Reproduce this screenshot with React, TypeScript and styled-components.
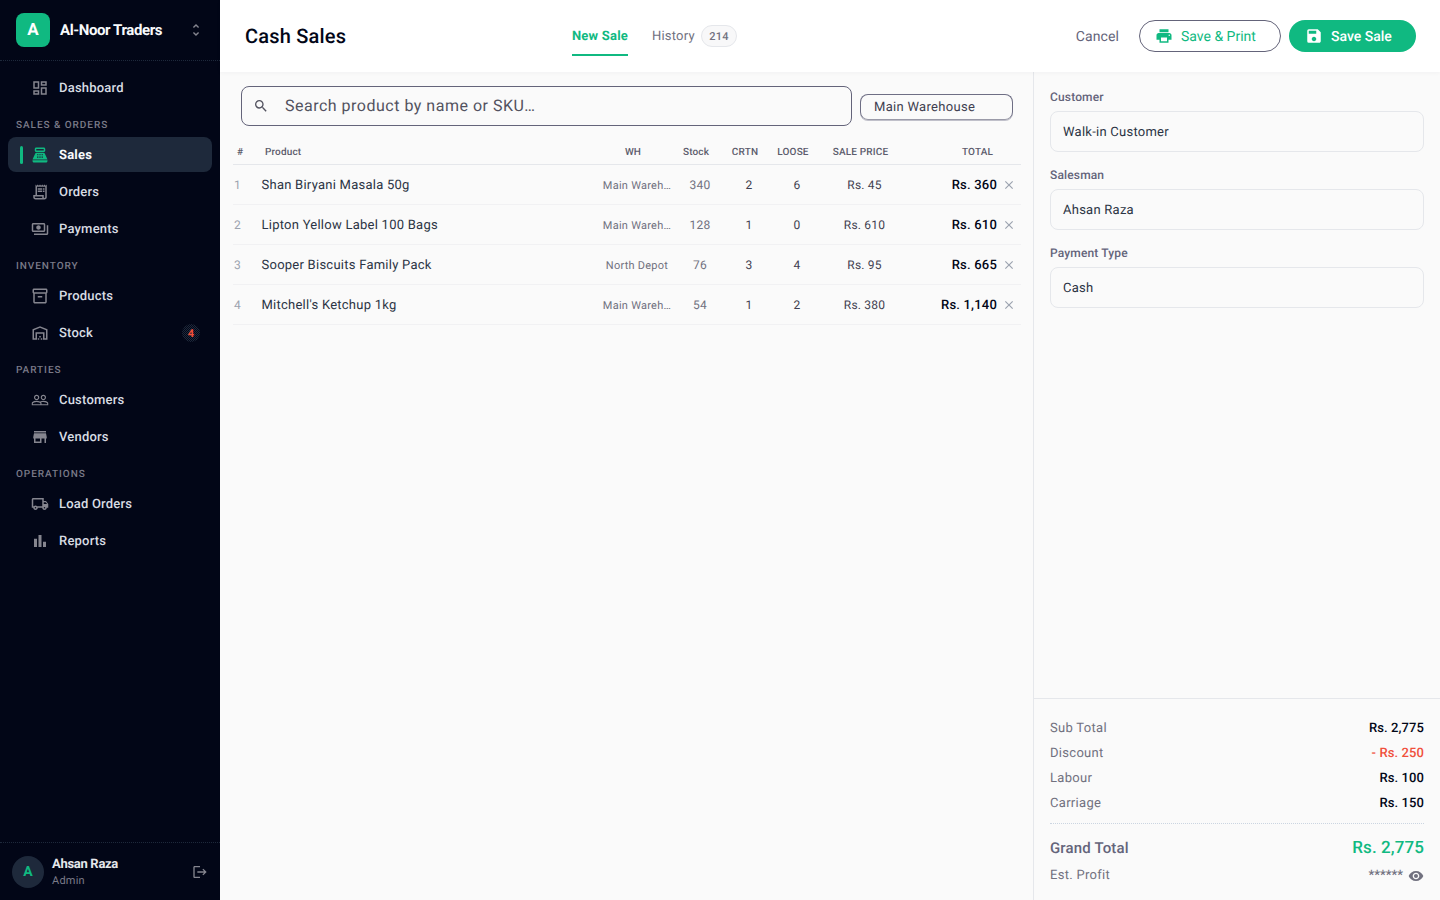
import React from 'react';
import styled, {createGlobalStyle} from 'styled-components';
import {
  MdOutlineDashboard,
  MdPointOfSale,
  MdOutlineReceiptLong,
  MdOutlinePayments,
  MdOutlineInventory2,
  MdOutlineWarehouse,
  MdPeopleOutline,
  MdStore,
  MdOutlineLocalShipping,
  MdBarChart,
  MdUnfoldMore,
  MdLogout,
  MdPrint,
  MdSave,
  MdSearch,
  MdClose,
  MdVisibility,
} from 'react-icons/md';

const GlobalStyle = createGlobalStyle`
  html, body {
    margin: 0;
    padding: 0;
    height: 100%;
    overflow: hidden;
    background: #fafafa;
    font-family: Roboto, "Liberation Sans", sans-serif;
    text-rendering: geometricPrecision;
  }
  * {
    box-sizing: border-box;
  }
`;

const Shell = styled.div`
  display: flex;
  width: 1440px;
  height: 900px;
`;

const Sidebar = styled.aside`
  width: 220px;
  flex-shrink: 0;
  display: flex;
  flex-direction: column;
  background: #020617;
`;

const Brand = styled.div`
  height: 61px;
  display: flex;
  align-items: center;
  padding: 0 16px 1px;
  border-bottom: 1px dotted #1e293b;
`;

const BrandLogo = styled.div`
  width: 34px;
  height: 34px;
  border-radius: 8px;
  background: #10b981;
  color: #fff;
  display: flex;
  align-items: center;
  justify-content: center;
  font-size: 17px;
  font-weight: 700;
`;

const BrandName = styled.div`
  margin-left: 10px;
  flex: 1;
  color: #f8fafc;
  font-size: 15px;
  font-weight: 700;
  letter-spacing: -0.4px;
`;

const BrandToggle = styled.span`
  display: flex;
  color: #85858f;
  font-size: 16px;
`;

const Nav = styled.nav`
  flex: 1;
  padding: 9px 8px 0;
`;

const SectionLabel = styled.div`
  height: 30px;
  padding: 11px 8px 0;
  color: #7a7a88;
  font-size: 10px;
  line-height: 16px;
  font-weight: 500;
  letter-spacing: 0.95px;
`;

const NavRow = styled.div<{$active?: boolean}>`
  position: relative;
  height: 35px;
  margin-bottom: 2px;
  display: flex;
  align-items: center;
  padding: 1px 0 0 23px;
  border-radius: 8px;
  background: ${(p) => (p.$active ? '#1e293b' : 'transparent')};
  color: ${(p) => (p.$active ? '#f8fafc' : '#d8dce3')};
  font-size: 13px;
  font-weight: ${(p) => (p.$active ? 700 : 500)};
  letter-spacing: 0.2px;
  svg {
    font-size: 18px;
    margin: -1px 10px 0 0;
    color: ${(p) => (p.$active ? '#10b981' : '#85858f')};
  }
`;

const ActiveBar = styled.span`
  position: absolute;
  left: 12px;
  top: 9px;
  width: 3px;
  height: 18px;
  border-radius: 2px;
  background: #10b981;
`;

const NavBadge = styled.span`
  position: absolute;
  right: 12px;
  top: 9px;
  width: 18px;
  height: 18px;
  border-radius: 50%;
  background: repeating-conic-gradient(#1e293b 0 25%, #020617 0 50%) 0 0 / 2px 2px;
  color: #f0503c;
  font-size: 11px;
  font-weight: 700;
  display: flex;
  align-items: center;
  justify-content: center;
`;

const UserBar = styled.div`
  height: 58px;
  display: flex;
  align-items: center;
  padding: 0 12px;
  border-top: 1px dotted #1e293b;
`;

const Avatar = styled.div`
  width: 32px;
  height: 32px;
  border-radius: 50%;
  background: #1e293b;
  color: #10b981;
  display: flex;
  align-items: center;
  justify-content: center;
  font-size: 14px;
  font-weight: 700;
`;

const UserInfo = styled.div`
  flex: 1;
  margin-left: 8px;
  padding-top: 2px;
`;

const UserName = styled.div`
  color: #e5e7eb;
  font-size: 13px;
  line-height: 16px;
  font-weight: 700;
  letter-spacing: -0.3px;
`;

const UserRole = styled.div`
  color: #7a7a88;
  font-size: 11px;
  line-height: 16px;
  letter-spacing: 0.2px;
`;

const LogoutIcon = styled.span`
  display: flex;
  color: #85858f;
  font-size: 16px;
`;

const Main = styled.main`
  flex: 1;
  min-width: 0;
  display: flex;
  flex-direction: column;
`;

const TopBar = styled.header`
  position: relative;
  height: 72px;
  display: flex;
  align-items: center;
  padding: 0 24px 0 25px;
  background: #fff;
  box-shadow: 0 1px 4px rgba(15, 23, 42, 0.04);
`;

const Title = styled.h1`
  width: 327px;
  margin: 0;
  color: #020617;
  font-size: 20px;
  font-weight: 500;
  letter-spacing: 0.2px;
`;

const Tabs = styled.div`
  flex: 1;
  height: 72px;
  display: flex;
  align-items: center;
  gap: 24px;
`;

const Tab = styled.div<{$active?: boolean}>`
  height: 72px;
  padding-top: 1px;
  display: flex;
  align-items: center;
  gap: 6px;
  position: relative;
  color: ${(p) => (p.$active ? '#10b981' : '#71717f')};
  font-size: 13px;
  font-weight: ${(p) => (p.$active ? 700 : 400)};
  letter-spacing: 0.2px;
`;

const TabLine = styled.span`
  position: absolute;
  left: 0;
  right: 0;
  bottom: 16px;
  height: 2px;
  background: #10b981;
`;

const TabCount = styled.span`
  height: 22px;
  margin-top: -1px;
  padding: 0 7.5px;
  display: flex;
  align-items: center;
  border: 1px solid #e5e7eb;
  border-radius: 11px;
  background: #f8f8f9;
  color: #71717f;
  font-size: 11px;
  font-weight: 500;
  letter-spacing: 0.3px;
`;

const Actions = styled.div`
  display: flex;
  align-items: center;
`;

const CancelLink = styled.span`
  margin-right: 20px;
  padding-top: 1px;
  color: #64647a;
  font-size: 14px;
  letter-spacing: 0.1px;
`;

const PillButton = styled.div<{$solid?: boolean}>`
  height: 32px;
  display: flex;
  align-items: center;
  gap: 8px;
  border-radius: 16px;
  font-size: 14px;
  font-weight: ${(p) => (p.$solid ? 500 : 400)};
  color: ${(p) => (p.$solid ? '#fff' : '#10b981')};
  background: ${(p) => (p.$solid ? '#10b981' : '#fff')};
  border: ${(p) => (p.$solid ? 'none' : '1px solid #64647a')};
  width: ${(p) => (p.$solid ? '127px' : '142px')};
  margin-left: ${(p) => (p.$solid ? '8px' : '0')};
  padding: 1px 0 0 ${(p) => (p.$solid ? '16px' : '15px')};
  svg {
    font-size: 18px;
    margin-top: -1px;
  }
`;

const Body = styled.div`
  flex: 1;
  min-height: 0;
  display: flex;
`;

const SalePanel = styled.section`
  width: 814px;
  padding: 14px 12px 0 13px;
  border-right: 1px solid #e5e7eb;
`;

const SearchRow = styled.div`
  display: flex;
  align-items: center;
  gap: 8px;
  padding: 0 8px;
`;

const SearchBox = styled.div`
  flex: 1;
  height: 40px;
  display: flex;
  align-items: center;
  padding: 0 0 1px 11px;
  border: 1px solid #64647a;
  border-radius: 8px;
  color: #52525f;
  font-size: 16px;
  letter-spacing: 0.5px;
  svg {
    font-size: 16px;
    margin-right: 16px;
    color: #52525f;
  }
`;

const WarehouseBox = styled.div`
  width: 153px;
  height: 26px;
  margin-top: 1px;
  display: flex;
  align-items: center;
  padding: 1px 0 0 13px;
  border: 1px solid #6e6e84;
  border-bottom-color: #9a9aa8;
  border-radius: 8px;
  box-shadow: 0 1px 0 #c0c0ca;
  color: #3f3f50;
  font-size: 13px;
  letter-spacing: 0.3px;
`;

const columns = '28px 1fr 76px 50px 48px 48px 87px 89px 24px';

const HeaderRow = styled.div`
  margin-top: 18px;
  height: 21px;
  padding: 0 4px 4px;
  display: grid;
  grid-template-columns: ${columns};
  align-items: center;
  border-bottom: 1px solid #e5e7eb;
`;

const HeaderCell = styled.div<{$align?: string}>`
  color: #5c5c6c;
  font-size: 10px;
  font-weight: 500;
  letter-spacing: 0.15px;
  text-align: ${(p) => p.$align || 'center'};
  white-space: nowrap;
`;

const ItemRow = styled.div`
  height: 40px;
  display: grid;
  grid-template-columns: ${columns};
  align-items: center;
  border-bottom: 1px solid #f1f1f3;
  color: #3f3f50;
  font-size: 12px;
  letter-spacing: 0.2px;
`;

const RowNumber = styled.div`
  color: #9ca3af;
  padding-left: 1px;
`;

const ProductName = styled.div`
  color: #2b3444;
  font-size: 13px;
  letter-spacing: 0.25px;
  padding: 1px 0 0 0.5px;
`;

const WarehouseCell = styled.div`
  color: #71717f;
  font-size: 11px;
  letter-spacing: 0.25px;
  text-align: center;
  white-space: nowrap;
  padding-top: 1px;
`;

const NumCell = styled.div<{$muted?: boolean}>`
  text-align: center;
  color: ${(p) => (p.$muted ? '#71717f' : '#3f3f50')};
`;

const TotalCell = styled.div`
  text-align: right;
  color: #020617;
  font-size: 13px;
  font-weight: 500;
  letter-spacing: 0.2px;
  padding-top: 1px;
`;

const RemoveCell = styled.div`
  display: flex;
  justify-content: center;
  color: #9ca3af;
  font-size: 14px;
`;

const SidePanel = styled.aside`
  flex: 1;
  min-width: 0;
  display: flex;
  flex-direction: column;
`;

const FormArea = styled.div`
  flex: 1;
  padding: 17px 16px 0;
`;

const FieldLabel = styled.div`
  height: 16px;
  margin-bottom: 6px;
  color: #64647a;
  font-size: 12px;
  line-height: 16px;
  font-weight: 500;
  letter-spacing: 0.15px;
`;

const FieldBox = styled.div`
  height: 41px;
  margin-bottom: 15px;
  display: flex;
  align-items: center;
  padding: 1px 0 0 12px;
  border: 1px solid #e5e7eb;
  border-radius: 8px;
  color: #2b3444;
  font-size: 13px;
  letter-spacing: 0.25px;
`;

const Summary = styled.div`
  height: 202px;
  padding: 17px 16px 0;
  border-top: 1px solid #e5e7eb;
`;

const SummaryRow = styled.div`
  height: 25px;
  display: flex;
  align-items: center;
  justify-content: space-between;
`;

const SummaryLabel = styled.span`
  color: #71717f;
  font-size: 13px;
  letter-spacing: 0.3px;
`;

const SummaryValue = styled.span<{$red?: boolean}>`
  color: ${(p) => (p.$red ? '#f0503c' : '#020617')};
  font-size: 13px;
  font-weight: 500;
  letter-spacing: 0.1px;
`;

const SummaryDivider = styled.div`
  margin: 7px 0 11px;
  border-top: 1px dotted #cbd5e1;
`;

const GrandRow = styled.div`
  height: 25px;
  display: flex;
  align-items: center;
  justify-content: space-between;
`;

const GrandLabel = styled.span`
  color: #64647a;
  font-size: 15px;
  font-weight: 500;
  letter-spacing: 0.15px;
`;

const GrandValue = styled.span`
  color: #10b981;
  font-size: 17px;
  font-weight: 500;
  letter-spacing: 0.1px;
`;

const ProfitRow = styled.div`
  height: 29px;
  padding-top: 2px;
  display: flex;
  align-items: center;
  justify-content: space-between;
`;

const ProfitValue = styled.span`
  display: flex;
  align-items: center;
  gap: 5px;
  color: #71717f;
  font-size: 13px;
  font-weight: 500;
  svg {
    font-size: 16px;
  }
`;

const navGroups = [
  {label: '', items: [{name: 'Dashboard', icon: MdOutlineDashboard}]},
  {
    label: 'SALES & ORDERS',
    items: [
      {name: 'Sales', icon: MdPointOfSale, active: true},
      {name: 'Orders', icon: MdOutlineReceiptLong},
      {name: 'Payments', icon: MdOutlinePayments},
    ],
  },
  {
    label: 'INVENTORY',
    items: [
      {name: 'Products', icon: MdOutlineInventory2},
      {name: 'Stock', icon: MdOutlineWarehouse, badge: '4'},
    ],
  },
  {
    label: 'PARTIES',
    items: [
      {name: 'Customers', icon: MdPeopleOutline},
      {name: 'Vendors', icon: MdStore},
    ],
  },
  {
    label: 'OPERATIONS',
    items: [
      {name: 'Load Orders', icon: MdOutlineLocalShipping},
      {name: 'Reports', icon: MdBarChart},
    ],
  },
];

const saleItems = [
  {name: 'Shan Biryani Masala 50g', wh: 'Main Wareh…', stock: 340, crtn: 2, loose: 6, price: 'Rs. 45', total: 'Rs. 360'},
  {name: 'Lipton Yellow Label 100 Bags', wh: 'Main Wareh…', stock: 128, crtn: 1, loose: 0, price: 'Rs. 610', total: 'Rs. 610'},
  {name: 'Sooper Biscuits Family Pack', wh: 'North Depot', stock: 76, crtn: 3, loose: 4, price: 'Rs. 95', total: 'Rs. 665'},
  {name: "Mitchell's Ketchup 1kg", wh: 'Main Wareh…', stock: 54, crtn: 1, loose: 2, price: 'Rs. 380', total: 'Rs. 1,140'},
];

const fields = [
  {label: 'Customer', value: 'Walk-in Customer'},
  {label: 'Salesman', value: 'Ahsan Raza'},
  {label: 'Payment Type', value: 'Cash'},
];

const summary = [
  {label: 'Sub Total', value: 'Rs. 2,775'},
  {label: 'Discount', value: '- Rs. 250', red: true},
  {label: 'Labour', value: 'Rs. 100'},
  {label: 'Carriage', value: 'Rs. 150'},
];

const App: React.FC = () => {
  return (
    <Shell>
      <GlobalStyle />
      <Sidebar>
        <Brand>
          <BrandLogo>A</BrandLogo>
          <BrandName>Al-Noor Traders</BrandName>
          <BrandToggle>
            <MdUnfoldMore />
          </BrandToggle>
        </Brand>
        <Nav>
          {navGroups.map((group) => (
            <div key={group.label || 'top'}>
              {group.label && <SectionLabel>{group.label}</SectionLabel>}
              {group.items.map((item: any) => (
                <NavRow key={item.name} $active={item.active}>
                  {item.active && <ActiveBar />}
                  <item.icon />
                  {item.name}
                  {item.badge && <NavBadge>{item.badge}</NavBadge>}
                </NavRow>
              ))}
            </div>
          ))}
        </Nav>
        <UserBar>
          <Avatar>A</Avatar>
          <UserInfo>
            <UserName>Ahsan Raza</UserName>
            <UserRole>Admin</UserRole>
          </UserInfo>
          <LogoutIcon>
            <MdLogout />
          </LogoutIcon>
        </UserBar>
      </Sidebar>

      <Main>
        <TopBar>
          <Title>Cash Sales</Title>
          <Tabs>
            <Tab $active>
              New Sale
              <TabLine />
            </Tab>
            <Tab>
              History
              <TabCount>214</TabCount>
            </Tab>
          </Tabs>
          <Actions>
            <CancelLink>Cancel</CancelLink>
            <PillButton>
              <MdPrint />
              Save &amp; Print
            </PillButton>
            <PillButton $solid>
              <MdSave />
              Save Sale
            </PillButton>
          </Actions>
        </TopBar>

        <Body>
          <SalePanel>
            <SearchRow>
              <SearchBox>
                <MdSearch />
                Search product by name or SKU…
              </SearchBox>
              <WarehouseBox>Main Warehouse</WarehouseBox>
            </SearchRow>
            <HeaderRow>
              <HeaderCell $align="left">#</HeaderCell>
              <HeaderCell $align="left">Product</HeaderCell>
              <HeaderCell>WH</HeaderCell>
              <HeaderCell>Stock</HeaderCell>
              <HeaderCell>CRTN</HeaderCell>
              <HeaderCell>LOOSE</HeaderCell>
              <HeaderCell>SALE PRICE</HeaderCell>
              <HeaderCell $align="right">TOTAL</HeaderCell>
              <HeaderCell />
            </HeaderRow>
            {saleItems.map((item, i) => (
              <ItemRow key={item.name}>
                <RowNumber>{i + 1}</RowNumber>
                <ProductName>{item.name}</ProductName>
                <WarehouseCell>{item.wh}</WarehouseCell>
                <NumCell $muted>{item.stock}</NumCell>
                <NumCell>{item.crtn}</NumCell>
                <NumCell>{item.loose}</NumCell>
                <NumCell>{item.price}</NumCell>
                <TotalCell>{item.total}</TotalCell>
                <RemoveCell>
                  <MdClose />
                </RemoveCell>
              </ItemRow>
            ))}
          </SalePanel>

          <SidePanel>
            <FormArea>
              {fields.map((f) => (
                <div key={f.label}>
                  <FieldLabel>{f.label}</FieldLabel>
                  <FieldBox>{f.value}</FieldBox>
                </div>
              ))}
            </FormArea>
            <Summary>
              {summary.map((s) => (
                <SummaryRow key={s.label}>
                  <SummaryLabel>{s.label}</SummaryLabel>
                  <SummaryValue $red={s.red}>{s.value}</SummaryValue>
                </SummaryRow>
              ))}
              <SummaryDivider />
              <GrandRow>
                <GrandLabel>Grand Total</GrandLabel>
                <GrandValue>Rs. 2,775</GrandValue>
              </GrandRow>
              <ProfitRow>
                <SummaryLabel>Est. Profit</SummaryLabel>
                <ProfitValue>
                  ******
                  <MdVisibility />
                </ProfitValue>
              </ProfitRow>
            </Summary>
          </SidePanel>
        </Body>
      </Main>
    </Shell>
  );
};

export default App;
